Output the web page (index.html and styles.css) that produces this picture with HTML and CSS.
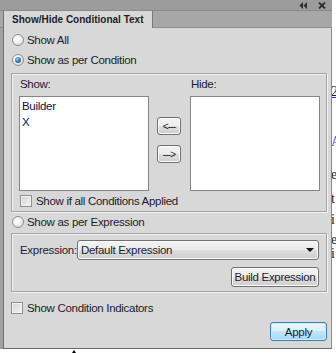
FILE: index.html
```html
<!DOCTYPE html>
<html lang="en">
<head>
  <meta charset="UTF-8">
  <title>Show/Hide Conditional Text</title>
  <link rel="stylesheet" href="styles.css">
</head>
<body>
  <div class="screen">
    <div class="window">
      <div class="titlebar">
        <svg class="tb-icon" width="8" height="7" viewBox="0 0 8 7">
          <path d="M4 0 L0.5 3.5 L4 7 Z M8 0 L4.5 3.5 L8 7 Z" fill="#2e2e2e"/>
        </svg>
        <svg class="tb-icon" width="8" height="7" viewBox="0 0 8 7">
          <path d="M1 0.5 L7 6.5 M7 0.5 L1 6.5" stroke="#2e2e2e" stroke-width="1.8"/>
        </svg>
      </div>
      <div class="tabrow">
        <div class="tab">Show/Hide Conditional Text</div>
      </div>

      <div class="panel">
        <label class="option">
          <span class="radio"></span>Show All
        </label>
        <label class="option">
          <span class="radio checked"></span>Show as per Condition
        </label>

        <!-- Condition lists -->
        <div class="group cond-group">
          <div class="lists">
            <div class="list-col">
              <div class="list-label">Show:</div>
              <div class="listbox">
                <div class="item">Builder</div>
                <div class="item">X</div>
              </div>
            </div>
            <div class="move-col">
              <button class="btn move">&lt;---</button>
              <button class="btn move">---&gt;</button>
            </div>
            <div class="list-col">
              <div class="list-label">Hide:</div>
              <div class="listbox"></div>
            </div>
          </div>
          <label class="check-row">
            <span class="checkbox"></span>Show if all Conditions Applied
          </label>
        </div>

        <label class="option">
          <span class="radio"></span>Show as per Expression
        </label>

        <!-- Expression -->
        <div class="group expr-group">
          <div class="expr-row">
            <span class="expr-label">Expression:</span>
            <div class="dropdown">
              <span>Default Expression</span>
              <span class="arrow"></span>
            </div>
          </div>
          <button class="btn build">Build Expression</button>
        </div>

        <label class="check-row indicators">
          <span class="checkbox"></span>Show Condition Indicators
        </label>

        <button class="btn apply">Apply</button>
      </div>
    </div>

    <!-- document behind the panel, mostly hidden -->
    <div class="doc">
      <span class="frag f1">2</span>
      <span class="frag f2 link">A</span>
      <span class="frag f3">e</span>
      <span class="frag f4">t</span>
      <span class="frag f5">i</span>
      <span class="frag f6">e</span>
      <span class="frag f7">i</span>
    </div>
  </div>
  <div class="bottom">
    <span class="cursor"></span>
  </div>
</body>
</html>
```

FILE: styles.css
```css
/* Basic styling */
body {
  margin: 0;
  width: 336px;
  height: 353px;
  overflow: hidden;
  background: #fff;
  font-family: "Liberation Sans", Arial, sans-serif;
  font-size: 11.5px;
  letter-spacing: -0.3px;
  color: #1c1c2c;
}

.screen {
  display: flex;
  height: 349px;
}

.window {
  width: 332px;
  display: flex;
  flex-direction: column;
  background: #a2a2a2;
}

.titlebar {
  height: 10px;
  border-bottom: 1px solid #8a8a8a;
  background: #9c9c9c;
  display: flex;
  justify-content: flex-end;
  align-items: center;
  gap: 11px;
  padding-right: 6px;
}

.tabrow {
  height: 16px;
  background: #a7a7a7;
  border-bottom: 1px solid #8d8d8d;
  padding-left: 3px;
  display: flex;
}

.tab {
  width: 140px;
  margin-bottom: -1px;
  padding-left: 8px;
  background: #d8d8d8;
  border-left: 1px solid #707070;
  border-right: 1px solid #7a7a7a;
  font-weight: bold;
  font-size: 10px;
  letter-spacing: 0;
  line-height: 17px;
  color: #1e1e1e;
  white-space: nowrap;
  overflow: hidden;
}

.panel {
  flex: 1;
  margin-left: 3px;
  background: #d8d8d8;
  border-left: 1px solid #6f6f6f;
  border-right: 1px solid #8a8a8a;
  border-bottom: 1px solid #6a6a6a;
  padding: 2px 4px 0 7px;
  display: flex;
  flex-direction: column;
}

.option {
  height: 20px;
  display: flex;
  align-items: center;
  padding-left: 1px;
}

.radio {
  width: 10px;
  height: 10px;
  margin-right: 3px;
  border: 1px solid #8e8f8f;
  border-radius: 50%;
  background: radial-gradient(circle at 40% 35%, #ffffff 20%, #d4d4d4 90%);
  position: relative;
}

.radio.checked::after {
  content: "";
  position: absolute;
  left: 2px;
  top: 2px;
  width: 6px;
  height: 6px;
  border-radius: 50%;
  background: radial-gradient(circle at 40% 35%, #9fd0f5 0%, #2a73b5 55%, #163c66 100%);
}

.group {
  border: 1px solid #a3a3a3;
  box-shadow: inset 1px 1px 0 #f2f2f2, 1px 1px 0 #f2f2f2;
}

.cond-group {
  margin-top: 3px;
  padding: 0 6px 2px 7px;
}

.lists {
  display: flex;
}

.list-col {
  display: flex;
  flex-direction: column;
}

.list-label {
  height: 22px;
  line-height: 20px;
  padding-left: 1px;
}

.listbox {
  width: 128px;
  height: 92px;
  border: 1px solid #868686;
  background: #fff;
  padding-top: 1px;
  box-sizing: content-box;
}

.item {
  line-height: 16px;
  padding-left: 2px;
  color: #10104a;
}

.move-col {
  width: 24px;
  margin: 0 9px 0 8px;
  padding-top: 43px;
  display: flex;
  flex-direction: column;
  gap: 10px;
}

.btn {
  font-family: inherit;
  font-size: 11.5px;
  letter-spacing: -0.3px;
  color: #1c1c2c;
  padding: 0;
  white-space: nowrap;
  border: 1px solid #707070;
  border-radius: 3px;
  background: linear-gradient(#f3f3f3, #ebebeb 50%, #dddddd 50%, #cfcfcf);
  box-shadow: inset 0 0 0 1px #fbfbfb;
}

.move {
  height: 18px;
  font-size: 10px;
  letter-spacing: -0.8px;
}

.check-row {
  height: 16px;
  margin-top: 2px;
  display: flex;
  align-items: center;
  padding-left: 1px;
}

.checkbox {
  width: 10px;
  height: 10px;
  margin-right: 4px;
  border: 1px solid #8e8f8f;
  background: linear-gradient(135deg, #d2d2d2, #f4f4f4);
  box-shadow: inset 0 0 0 1px #f2f2f2;
}

.expr-group {
  margin-top: 1px;
  padding: 6px 7px 4px 8px;
  display: flex;
  flex-direction: column;
  gap: 7px;
}

.expr-row {
  display: flex;
  align-items: center;
}

.expr-label {
  width: 57px;
}

.dropdown {
  flex: 1;
  height: 18px;
  border: 1px solid #707070;
  border-radius: 3px;
  background: linear-gradient(#f3f3f3, #ebebeb 50%, #dddddd 50%, #cfcfcf);
  box-shadow: inset 0 0 0 1px #fbfbfb;
  display: flex;
  align-items: center;
  justify-content: space-between;
  padding: 0 4px 0 3px;
}

.arrow {
  width: 0;
  height: 0;
  border-left: 4px solid transparent;
  border-right: 4px solid transparent;
  border-top: 4px solid #111;
}

.build {
  align-self: flex-end;
  width: 88px;
  height: 20px;
}

.indicators {
  margin-top: 8px;
  padding-left: 0;
}

.apply {
  align-self: flex-end;
  margin-top: 6px;
  width: 57px;
  height: 19px;
  border-color: #3c7fb1;
  background: linear-gradient(#eaf6fd, #d9f0fc 50%, #bee6fd 50%, #a7d9f5);
  box-shadow: inset 0 0 0 1px #c8ecff;
}

/* page behind the panel */
.doc {
  flex: 1;
  margin-top: 11px;
  overflow: hidden;
  display: flex;
  flex-direction: column;
  font-family: "Liberation Serif", serif;
  font-size: 14px;
  line-height: 14px;
  color: #222;
}

.frag {
  margin-left: -1px;
}

.f1 { margin-top: 74px; text-decoration: underline; text-decoration-color: #3333cc; }
.f2 { margin-top: 36px; color: #4a3ad0; }
.f3 { margin-top: 19px; }
.f4 { margin-top: 10px; }
.f5 { margin-top: 7px; }
.f6 { margin-top: 6px; }
.f7 { margin-top: 0; }

.bottom {
  height: 4px;
  padding-left: 72px;
}

.cursor {
  display: block;
  width: 0;
  height: 0;
  border-left: 2px solid transparent;
  border-right: 2px solid transparent;
  border-bottom: 3px solid #000;
  margin-top: 1px;
}
```
